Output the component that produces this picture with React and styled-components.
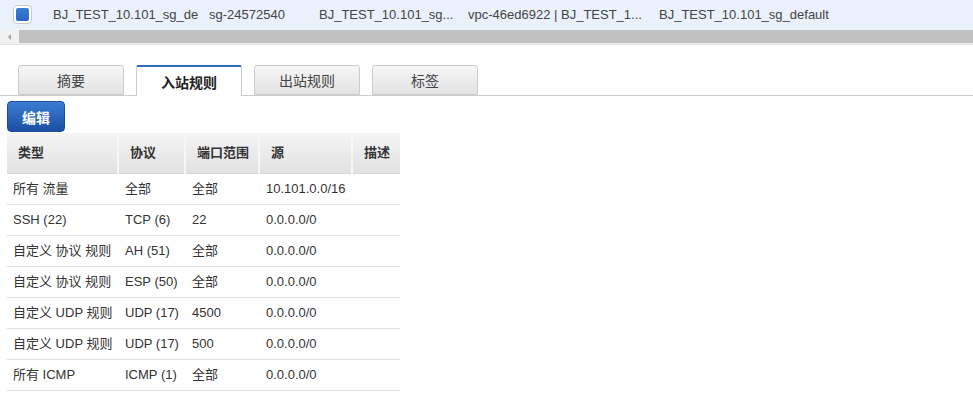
import styled, { createGlobalStyle } from "styled-components";

const GlobalStyle = createGlobalStyle`
  body {
    margin: 0;
    background: #fff;
    font-family: "Liberation Sans", Arial, "Noto Sans CJK SC", sans-serif;
    color: #333;
  }
`;

const Page = styled.div`
  display: flex;
  flex-direction: column;
  width: 973px;
  height: 400px;
  overflow: hidden;
`;

const SelectedRow = styled.div`
  display: flex;
  align-items: center;
  height: 29px;
  background-color: #eaf1fb;
  font-size: 13px;
  color: #444;
  white-space: nowrap;
`;

const CheckCell = styled.div`
  display: flex;
  align-items: center;
  width: 53px;
  padding-left: 13px;
  box-sizing: border-box;
`;

const CheckBox = styled.div`
  width: 19px;
  height: 19px;
  box-sizing: border-box;
  border: 1px solid #c9c9c9;
  border-radius: 4px;
  background: #fff;
  display: flex;
  align-items: center;
  justify-content: center;

  &::after {
    content: "";
    width: 13px;
    height: 13px;
    border-radius: 2px;
    background: linear-gradient(#3b7fd6, #2a66c2);
  }
`;

const Cell = styled.div`
  width: ${(props) => props.width}px;
  flex: ${(props) => (props.width ? "none" : 1)};
  overflow: hidden;
`;

const ScrollBar = styled.div`
  display: flex;
  align-items: stretch;
  height: 13px;
  padding: 1px 0 1px 0;
  background-color: #f1f1f1;
  border-bottom: 1px solid #e2e2e2;
`;

const ScrollArrow = styled.div`
  width: 19px;
  display: flex;
  align-items: center;
  justify-content: center;

  &::before {
    content: "";
    width: 0;
    height: 0;
    border-top: 3px solid transparent;
    border-bottom: 3px solid transparent;
    border-right: 3px solid #a3a3a3;
  }
`;

const ScrollThumb = styled.div`
  flex: 1;
  background-color: #c1c1c1;
`;

const Tabs = styled.div`
  display: flex;
  gap: 12px;
  margin-top: 20px;
  padding-left: 18px;
  border-bottom: 1px solid #cccccc;
  height: 30px;
`;

const Tab = styled.div`
  width: 106px;
  height: ${(props) => (props.active ? "31px" : "30px")};
  box-sizing: border-box;
  display: flex;
  align-items: center;
  justify-content: center;
  font-size: 14px;
  border: 1px solid #cccccc;
  border-radius: 3px 3px 0 0;
  color: ${(props) => (props.active ? "#222" : "#444")};
  font-weight: ${(props) => (props.active ? "bold" : "normal")};
  background: ${(props) =>
    props.active ? "#fff" : "linear-gradient(#f7f7f7, #e2e2e2)"};
  ${(props) =>
    props.active &&
    `
    border-top: 2px solid #2e6dbd;
    border-bottom: none;
    border-radius: 2px 2px 0 0;
    padding-top: 1px;
  `}
`;

const Toolbar = styled.div`
  padding: 5px 0 1px 7px;
`;

const EditButton = styled.button`
  width: 58px;
  height: 31px;
  border: 1px solid #1d4f9c;
  border-radius: 4px;
  background: linear-gradient(#3a7dd2, #1b4fa3);
  color: #fff;
  font-size: 14px;
  font-weight: bold;
  font-family: inherit;
  cursor: pointer;
`;

const Table = styled.table`
  margin-left: 7px;
  width: 393px;
  border-collapse: collapse;
  font-size: 13px;
  line-height: 16px;
  table-layout: fixed;
`;

const HeadCell = styled.th`
  height: 40px;
  padding: 0 0 0 11px;
  text-align: left;
  font-weight: bold;
  color: #333;
  background: linear-gradient(#f4f4f4, #e2e2e2);
  border-left: 2px solid #f7f7f7;
  border-bottom: 1px solid #d6d6d6;

  &:first-child {
    border-left: none;
  }
`;

const Row = styled.tr`
  height: 31px;
  border-bottom: 1px solid #dddddd;
`;

const BodyCell = styled.td`
  padding: 0 0 0 ${(props) => (props.first ? 6 : 7)}px;
  color: #333;
  white-space: nowrap;
`;

const columns = [
  { title: "类型", width: 111 },
  { title: "协议", width: 67 },
  { title: "端口范围", width: 74 },
  { title: "源", width: 93 },
  { title: "描述", width: 48 },
];

const rules = [
  ["所有 流量", "全部", "全部", "10.101.0.0/16"],
  ["SSH (22)", "TCP (6)", "22", "0.0.0.0/0"],
  ["自定义 协议 规则", "AH (51)", "全部", "0.0.0.0/0"],
  ["自定义 协议 规则", "ESP (50)", "全部", "0.0.0.0/0"],
  ["自定义 UDP 规则", "UDP (17)", "4500", "0.0.0.0/0"],
  ["自定义 UDP 规则", "UDP (17)", "500", "0.0.0.0/0"],
  ["所有 ICMP", "ICMP (1)", "全部", "0.0.0.0/0"],
];

const tabs = ["摘要", "入站规则", "出站规则", "标签"];

const App = () => {
  return (
    <Page>
      <GlobalStyle />
      <SelectedRow>
        <CheckCell>
          <CheckBox />
        </CheckCell>
        <Cell width={156}>BJ_TEST_10.101_sg_de</Cell>
        <Cell width={110}>sg-24572540</Cell>
        <Cell width={149}>BJ_TEST_10.101_sg...</Cell>
        <Cell width={191}>vpc-46ed6922 | BJ_TEST_1...</Cell>
        <Cell>BJ_TEST_10.101_sg_default</Cell>
      </SelectedRow>
      <ScrollBar>
        <ScrollArrow />
        <ScrollThumb />
      </ScrollBar>
      <Tabs>
        {tabs.map((t, i) => (
          <Tab key={t} active={i === 1}>
            {t}
          </Tab>
        ))}
      </Tabs>
      <Toolbar>
        <EditButton>编辑</EditButton>
      </Toolbar>
      <Table>
        <colgroup>
          {columns.map((c) => (
            <col key={c.title} style={{ width: c.width }} />
          ))}
        </colgroup>
        <thead>
          <tr>
            {columns.map((c) => (
              <HeadCell key={c.title}>{c.title}</HeadCell>
            ))}
          </tr>
        </thead>
        <tbody>
          {rules.map((r, i) => (
            <Row key={i}>
              {r.map((v, j) => (
                <BodyCell key={j} first={j === 0}>
                  {v}
                </BodyCell>
              ))}
              <BodyCell />
            </Row>
          ))}
        </tbody>
      </Table>
    </Page>
  );
};

export default App;
